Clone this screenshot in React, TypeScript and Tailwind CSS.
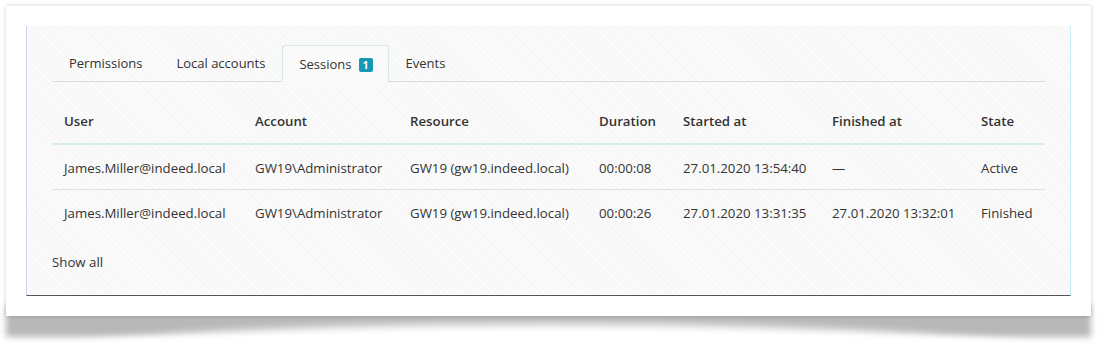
import { useState } from 'react';

interface Session {
  user: string;
  account: string;
  resource: string;
  duration: string;
  startedAt: string;
  finishedAt: string;
  state: string;
}

const tabs = ['Permissions', 'Local accounts', 'Sessions', 'Events'];

const sessions: Session[] = [
  {
    user: 'James.Miller@indeed.local',
    account: 'GW19\\Administrator',
    resource: 'GW19 (gw19.indeed.local)',
    duration: '00:00:08',
    startedAt: '27.01.2020 13:54:40',
    finishedAt: '—',
    state: 'Active',
  },
  {
    user: 'James.Miller@indeed.local',
    account: 'GW19\\Administrator',
    resource: 'GW19 (gw19.indeed.local)',
    duration: '00:00:26',
    startedAt: '27.01.2020 13:31:35',
    finishedAt: '27.01.2020 13:32:01',
    state: 'Finished',
  },
];

const columns = ['User', 'Account', 'Resource', 'Duration', 'Started at', 'Finished at', 'State'];

const gridCols = 'grid grid-cols-[191px_155px_189px_84px_149px_149px_77px]';

export default function App() {
  const [activeTab, setActiveTab] = useState('Sessions');

  return (
    <div className="w-[1105px] h-[346px] overflow-hidden bg-white p-[6px] font-['Open_Sans',sans-serif] text-[13.25px] text-[#333]">
      <div className="relative w-[1085px] h-[310px]">
        {/* curled page shadow */}
        <div className="absolute left-[0px] right-[0px] bottom-[-21px] h-[31px] bg-[#b8b8b8] blur-[3px]" />
        <div className="absolute left-[50px] right-[50px] top-[318px] h-[60px] rounded-[50%] bg-white blur-[4px]" />
        <div className="relative h-full bg-white px-5 pt-5 shadow-[0_0_4px_rgba(0,0,0,0.2)]">
          <div className="h-[270px] flex flex-col px-[25px] pt-[19px] border-l border-l-[#cfd2f0] border-r border-r-[#c4f0f4] border-b border-b-[#555] bg-[repeating-linear-gradient(45deg,#f7f7f7_0px,#f7f7f7_2px,#fbfbfb_2px,#fbfbfb_4px)]">
            <div className="flex border-b border-[#dcdcdc] h-[37px] text-[13px]">
              {tabs.map((tab) => {
                const active = tab === activeTab;
                return (
                  <button
                    key={tab}
                    onClick={() => setActiveTab(tab)}
                    className={
                      active
                        ? 'flex items-center gap-[7px] pl-4 pr-[15px] pt-[2px] -mb-px bg-[#fafafa] border border-b-0 border-[#d8e8ec] rounded-t-[3px]'
                        : 'flex items-center px-4 pt-[2px] border border-transparent'
                    }
                  >
                    <span>{tab}</span>
                    {tab === 'Sessions' && (
                      <span className="flex items-center justify-center w-[14px] h-[14px] rounded-[2px] bg-[#1597b5] text-white text-[10px] font-bold leading-none">
                        1
                      </span>
                    )}
                  </button>
                );
              })}
            </div>

            <div className="mt-[19px]">
              <div className={`${gridCols} h-[44px] items-center border-b-2 border-[#d9ecf1] font-semibold`}>
                {columns.map((c) => (
                  <div key={c} className="px-3">
                    {c}
                  </div>
                ))}
              </div>
              {sessions.map((s, i) => (
                <div
                  key={i}
                  className={`${gridCols} h-[45px] items-center pt-[3px] ${i === 0 ? 'border-b border-[#e1e1e1]' : ''}`}
                >
                  <div className="px-3">{s.user}</div>
                  <div className="px-3">{s.account}</div>
                  <div className="px-3">{s.resource}</div>
                  <div className="px-3">{s.duration}</div>
                  <div className="px-3">{s.startedAt}</div>
                  <div className="px-3">{s.finishedAt}</div>
                  <div className="px-3">{s.state}</div>
                </div>
              ))}
            </div>

            <a className="mt-[18px] self-start cursor-pointer">Show all</a>
          </div>
        </div>
      </div>
    </div>
  );
}
